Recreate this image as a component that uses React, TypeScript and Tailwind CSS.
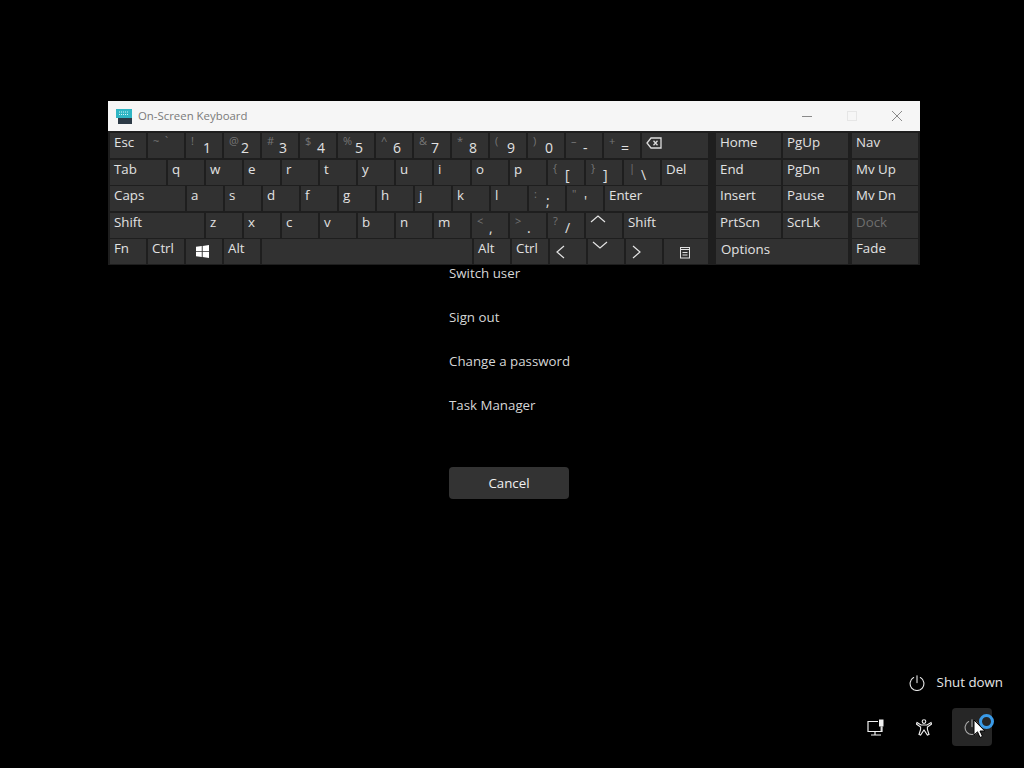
type KeyDef = {
  label?: string;
  shift?: string;
  width?: string;
  icon?: "back" | "win" | "menu" | "left" | "right" | "up" | "down";
  dim?: boolean;
  inset?: string;
};

const rows: KeyDef[][] = [
  [
    { label: "Esc" },
    { shift: "~  `" },
    { label: "1", shift: "!" },
    { label: "2", shift: "@" },
    { label: "3", shift: "#" },
    { label: "4", shift: "$" },
    { label: "5", shift: "%" },
    { label: "6", shift: "^" },
    { label: "7", shift: "&" },
    { label: "8", shift: "*" },
    { label: "9", shift: "(" },
    { label: "0", shift: ")" },
    { label: "-", shift: "–" },
    { label: "=", shift: "+" },
    { icon: "back", width: "w-[66px]" },
  ],
  [
    { label: "Tab", width: "w-[56px]" },
    { label: "q" },
    { label: "w" },
    { label: "e" },
    { label: "r" },
    { label: "t" },
    { label: "y" },
    { label: "u" },
    { label: "i" },
    { label: "o" },
    { label: "p" },
    { label: "[", shift: "{" },
    { label: "]", shift: "}" },
    { label: "\\", shift: "|" },
    { label: "Del", width: "w-[46px]" },
  ],
  [
    { label: "Caps", width: "w-[75px]" },
    { label: "a" },
    { label: "s" },
    { label: "d" },
    { label: "f" },
    { label: "g" },
    { label: "h" },
    { label: "j" },
    { label: "k" },
    { label: "l" },
    { label: ";", shift: ":" },
    { label: "'", shift: '"' },
    { label: "Enter", width: "w-[103px]" },
  ],
  [
    { label: "Shift", width: "w-[94px]" },
    { label: "z" },
    { label: "x" },
    { label: "c" },
    { label: "v" },
    { label: "b" },
    { label: "n" },
    { label: "m" },
    { label: ",", shift: "<" },
    { label: ".", shift: ">" },
    { label: "/", shift: "?" },
    { icon: "up" },
    { label: "Shift", width: "w-[84px]" },
  ],
  [
    { label: "Fn" },
    { label: "Ctrl" },
    { icon: "win" },
    { label: "Alt" },
    { width: "w-[210px]" },
    { label: "Alt" },
    { label: "Ctrl" },
    { icon: "left" },
    { icon: "down" },
    { icon: "right" },
    { icon: "menu", width: "w-[44px]" },
  ],
];

const navRows: KeyDef[][] = [
  [{ label: "Home", width: "w-[65px]" }, { label: "PgUp", width: "w-[65px]" }],
  [{ label: "End", width: "w-[65px]" }, { label: "PgDn", width: "w-[65px]" }],
  [{ label: "Insert", width: "w-[65px]" }, { label: "Pause", width: "w-[65px]" }],
  [{ label: "PrtScn", width: "w-[65px]" }, { label: "ScrLk", width: "w-[65px]" }],
  [{ label: "Options", width: "w-[132px]", inset: "top-[1px] left-[5px]" }],
];

const sideKeys: KeyDef[] = [
  { label: "Nav" },
  { label: "Mv Up" },
  { label: "Mv Dn" },
  { label: "Dock", dim: true },
  { label: "Fade" },
];

function KeyIcon({ name }: { name: NonNullable<KeyDef["icon"]> }) {
  if (name === "win") {
    return (
      <svg width="13" height="13" viewBox="0 0 14 14" className="mt-[6px] ml-[10px]" fill="#fff">
        <path d="M0 2 6.2 1.1V6.6H0ZM7.2 1 14 0V6.6H7.2ZM0 7.5H6.2V12.9L0 12ZM7.2 7.5H14V14L7.2 13Z" />
      </svg>
    );
  }
  if (name === "back") {
    return (
      <svg width="16" height="12" viewBox="0 0 16 12" className="mt-[4px] ml-[4px]" fill="none" stroke="#dcdcdc" strokeWidth="1.3">
        <path d="M5 1H15V11H5L1 6Z" />
        <path d="M7.5 3.8 11.5 8.2M11.5 3.8 7.5 8.2" />
      </svg>
    );
  }
  if (name === "menu") {
    return (
      <svg width="12" height="13" viewBox="0 0 12 13" className="mt-[7px] ml-[15px]" fill="none" stroke="#e0e0e0" strokeWidth="1">
        <rect x="1.5" y="1.5" width="9" height="10.5" />
        <path d="M1.5 3.5H10.5M3.5 6.5H8.5M3.5 9H8.5" />
      </svg>
    );
  }
  const paths = {
    left: "M9 1 2 7 9 13",
    right: "M2 1 9 7 2 13",
    up: "M1 8 8 2 15 8",
    down: "M1 2 8 8 15 2",
  };
  const wide = name === "up" || name === "down";
  return (
    <svg
      width={wide ? 16 : 11}
      height={wide ? 10 : 14}
      viewBox={wide ? "0 0 16 10" : "0 0 11 14"}
      className={wide ? "mt-[1px] ml-[4px]" : "mt-[6px] ml-[5px]"}
      fill="none"
      stroke="#e4e4e4"
      strokeWidth="1.2"
    >
      <path d={paths[name]} />
    </svg>
  );
}

function Key({ def }: { def: KeyDef }) {
  const single = def.label && !def.shift;
  return (
    <div className={`relative h-[25px] shrink-0 bg-[#313131] ${def.width ?? "w-[36px]"}`}>
      {def.icon && <KeyIcon name={def.icon} />}
      {single && (
        <span
          className={`absolute whitespace-nowrap text-[13.3px] leading-[18px] ${def.inset ?? "top-[0px] left-[4px]"} ${
            def.dim ? "text-[#6e6e6e]" : "text-[#e2e2e2]"
          }`}
        >
          {def.label}
        </span>
      )}
      {def.shift && (
        <span className="absolute top-[0px] left-[5px] whitespace-pre text-[11px] leading-[16px] text-[#767676]">{def.shift}</span>
      )}
      {def.shift && def.label && (
        <span className="absolute top-[6px] left-[17px] text-[14px] leading-[18px] text-[#e2e2e2]">{def.label}</span>
      )}
    </div>
  );
}

function PowerIcon({ color = "#e6e6e6", size = 16 }: { color?: string; size?: number }) {
  return (
    <svg width={size} height={size} viewBox="0 0 16 16" fill="none" stroke={color} strokeWidth="1.1" strokeLinecap="round">
      <path d="M4.6 2.6A6.9 6.9 0 1 0 11.4 2.6" />
      <path d="M8 0.8V7.6" />
    </svg>
  );
}

export default function App() {
  return (
    <div
      className="relative flex h-[768px] w-[1024px] flex-col overflow-hidden bg-black text-[13.3px] text-[#e6e6e6]"
      style={{ fontFamily: '"Open Sans", "Noto Sans", sans-serif' }}
    >
      {/* Security options menu */}
      <div className="ml-[449px] flex w-[120px] flex-col pt-[252px]">
        {["Switch user", "Sign out", "Change a password", "Task Manager"].map((item) => (
          <div key={item} className="flex h-[44px] items-center whitespace-nowrap text-[#d6d6d6]">
            {item}
          </div>
        ))}
        <button className="mt-[39px] h-[32px] rounded-[4px] bg-[#333333] pt-[1px] text-[#f0f0f0]">Cancel</button>
      </div>

      {/* Bottom right actions */}
      <div className="mt-auto flex flex-col items-end pr-[32px] pb-[22px]">
        <div className="mr-[-11px] mb-[9px] flex h-[32px] items-center gap-[12px] text-[#e6e6e6]">
          <PowerIcon />
          <span>Shut down</span>
        </div>
        <div className="flex items-center gap-[8px]">
          <div className="flex h-[38px] w-[40px] items-center justify-center">
            <svg width="18" height="19" viewBox="0 0 18 18" fill="none" stroke="#f0f0f0" strokeWidth="1.2">
              <path d="M11 3H1V13H15V8" />
              <path d="M8 13V16M4 16.5H14" />
              <rect x="12" y="1" width="4.5" height="7" fill="#f0f0f0" stroke="none" />
              <path d="M14.2 8V13" />
            </svg>
          </div>
          <div className="flex h-[38px] w-[40px] items-center justify-center">
            <svg width="16" height="17" viewBox="0 0 16 17" fill="none" stroke="#f0f0f0" strokeWidth="1.1">
              <circle cx="8" cy="2.6" r="1.8" />
              <path d="M1 3.5 5 6H11L15 3.5 15.6 5 11.4 8V10.5L13 15.5 11.4 16 8 11 4.6 16 3 15.5 4.6 10.5V8L.4 5Z" />
            </svg>
          </div>
          <div className="relative flex h-[38px] w-[40px] items-center justify-center rounded-[4px] bg-[#262626]">
            <PowerIcon color="#a8a8a8" />
            {/* Busy ring and pointer lie over the button */}
            <div className="absolute top-[6px] left-[27px] h-[15px] w-[15px] rounded-full border-[3px] border-[#3a9be8]" />
            <svg width="13" height="20" viewBox="0 0 13 20" className="absolute top-[11px] left-[21px]">
              <path d="M1 1V16L4.5 12.8 7 18.5 9.5 17.4 7 12H11.8Z" fill="#fff" stroke="#000" strokeWidth="1" />
            </svg>
          </div>
        </div>
      </div>

      {/* On-Screen Keyboard window */}
      <div className="absolute top-[101px] left-[108px] w-[812px]">
        <div className="flex h-[30px] items-center bg-[#f6f6f6] pl-[8px]">
          <svg width="16" height="15" viewBox="0 0 16 15">
            <rect x="0" y="0" width="16" height="9" fill="#2fb5c4" />
            <rect x="2" y="9" width="14" height="6" fill="#2d3a46" />
            <path d="M3 3H13M3 5.5H13" stroke="#d6f4f7" strokeWidth="1" strokeDasharray="1 1" />
          </svg>
          <span className="ml-[6px] text-[11.4px] text-[#7a7a7a]">On-Screen Keyboard</span>
          <div className="ml-auto flex items-center">
            <div className="flex w-[45px] justify-center">
              <div className="h-px w-[10px] bg-[#8a8a8a]" />
            </div>
            <div className="flex w-[45px] justify-center">
              <div className="h-[10px] w-[10px] border border-[#e6e6e6]" />
            </div>
            <div className="flex w-[46px] justify-center">
              <svg width="12" height="12" viewBox="0 0 12 12" stroke="#8a8a8a" strokeWidth="1">
                <path d="M1 1 11 11M11 1 1 11" />
              </svg>
            </div>
          </div>
        </div>
        <div className="flex h-[134px] gap-[8px] bg-[#1e1e1e] pt-[2px] pl-[2px]">
          <div className="flex flex-col gap-[1.5px]">
            {rows.map((row, i) => (
              <div key={i} className="flex gap-[2px]">
                {row.map((def, j) => (
                  <Key key={j} def={def} />
                ))}
              </div>
            ))}
          </div>
          <div className="flex flex-col gap-[1.5px]">
            {navRows.map((row, i) => (
              <div key={i} className="flex gap-[2px]">
                {row.map((def) => (
                  <Key key={def.label} def={def} />
                ))}
              </div>
            ))}
          </div>
          <div className="ml-[-4px] flex flex-col gap-[1.5px]">
            {sideKeys.map((def) => (
              <Key key={def.label} def={{ ...def, width: "w-[66px]" }} />
            ))}
          </div>
        </div>
      </div>
    </div>
  );
}
